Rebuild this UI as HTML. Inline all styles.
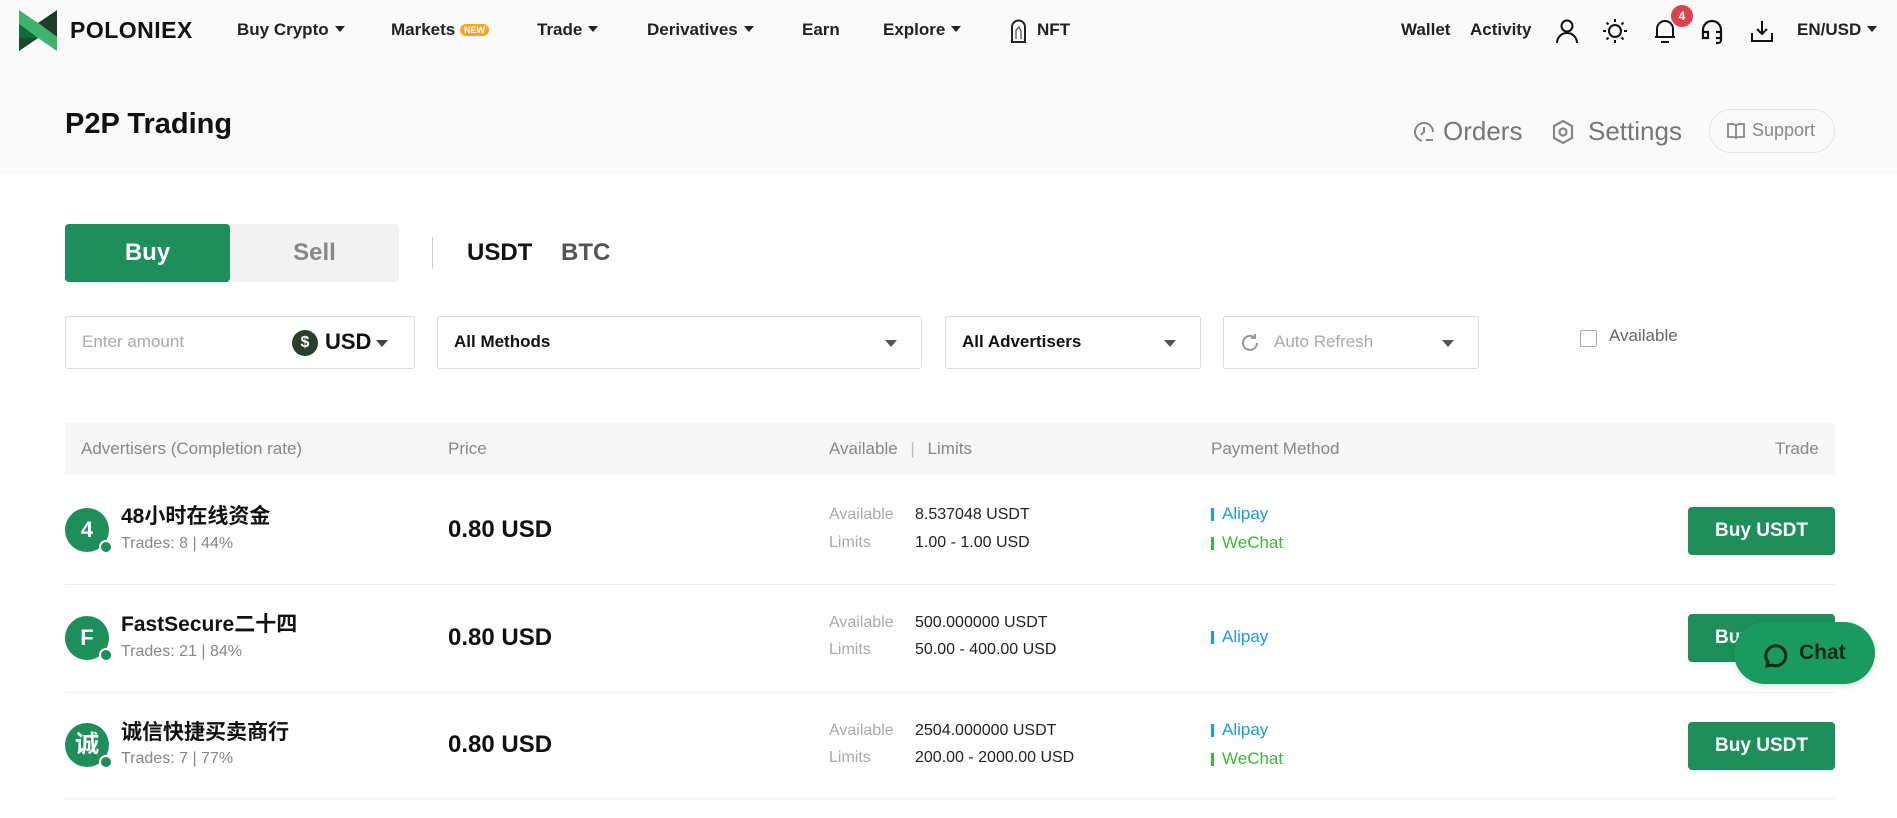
<!DOCTYPE html>
<html><head><meta charset="utf-8"><style>
*{box-sizing:border-box;margin:0;padding:0}
body{width:1897px;height:818px;overflow:hidden;background:#fff;font-family:"Liberation Sans","Noto Sans CJK SC",sans-serif;color:#111;position:relative}
.a{position:absolute;white-space:nowrap}
.top{position:absolute;left:0;top:0;width:1897px;height:174px;background:#fafafa}
.nav{font-size:17px;font-weight:bold;color:#222;top:20px}
.car{display:inline-block;width:0;height:0;border-left:5px solid transparent;border-right:5px solid transparent;border-top:6px solid #222;margin-left:6px;vertical-align:3px}
.inp{position:absolute;top:316px;height:53px;border:1px solid #ddd;border-radius:3px;background:#fff}
.inp .t{position:absolute;left:16px;top:15px;font-size:17px}
.inp .c{position:absolute;right:24px;top:23px;border-left:6px solid transparent;border-right:6px solid transparent;border-top:7px solid #555}
.hd{top:439px;font-size:17px;color:#888}
.av{position:absolute;left:65px;width:44px;height:44px;border-radius:50%;background:#1e8f5a;color:#fff;font-weight:bold;font-size:22px;text-align:center;line-height:44px}
.av i{position:absolute;right:-4px;bottom:-2px;width:14px;height:14px;border-radius:50%;background:#1e8f5a;border:2px solid #fff}
.nm{font-size:21px;font-weight:bold;color:#111}
.tr{font-size:16px;color:#888}
.pr{font-size:24px;font-weight:bold;left:448px}
.lb{font-size:16px;color:#aaa;left:829px}
.vl{font-size:16px;color:#222;left:915px}
.pm{font-size:17px;left:1211px;padding-left:11px;line-height:20px}
.pm:before{content:"";position:absolute;left:0;top:4px;width:3px;height:13px;background:currentColor}
.ali{color:#1a9ce0}
.wc{color:#3cb93c}
.btn{position:absolute;left:1688px;width:147px;height:48px;background:#1e8f5a;border-radius:4px;color:#fff;font-weight:bold;font-size:19px;text-align:center;line-height:48px}
.ln{position:absolute;left:65px;width:1770px;height:1px;background:#eee}
</style></head><body>
<div class="top"></div>
<svg class="a" style="left:19px;top:10px" width="38" height="41" viewBox="0 0 38 41"><polygon points="0,0 19,13 19,28 0,41" fill="#3db36b"/><polygon points="0,14 19,28 0,41" fill="#1a4a30"/><polygon points="38,0 19,13 38,27" fill="#1f3b2c"/><polygon points="19,13 38,27 38,41 19,28" fill="#3db36b"/><polygon points="0,14 19,28 0,28" fill="#0f6b3c"/></svg>
<div class="a" style="left:70px;top:17px;font-size:23px;font-weight:bold;letter-spacing:0.5px">POLONIEX</div>
<div class="a nav" style="left:237px">Buy Crypto<span class="car"></span></div>
<div class="a nav" style="left:391px">Markets <span style="display:inline-block;background:#f5a623;color:#fff;font-size:9px;border-radius:7px;padding:1px 4px;vertical-align:2px">NEW</span></div>
<div class="a nav" style="left:537px">Trade<span class="car"></span></div>
<div class="a nav" style="left:647px">Derivatives<span class="car"></span></div>
<div class="a nav" style="left:802px">Earn</div>
<div class="a nav" style="left:883px">Explore<span class="car"></span></div>
<svg class="a" style="left:1010px;top:19px" width="17" height="24" viewBox="0 0 17 24"><path d="M2 23V8a6.5 6.5 0 0 1 13 0v15z" fill="none" stroke="#222" stroke-width="2"/><path d="M6 20V11l3-3 2 4v8" fill="none" stroke="#555" stroke-width="1.3"/></svg>
<div class="a nav" style="left:1037px">NFT</div>
<div class="a nav" style="left:1401px">Wallet</div>
<div class="a nav" style="left:1470px">Activity</div>
<svg class="a" style="left:1554px;top:18px" width="26" height="26" viewBox="0 0 26 26" fill="none" stroke="#111" stroke-width="2"><circle cx="13" cy="8" r="5.5"/><path d="M3 25a10 10 0 0 1 20 0"/></svg>
<svg class="a" style="left:1602px;top:18px" width="26" height="26" viewBox="0 0 26 26" fill="none" stroke="#111" stroke-width="2"><circle cx="13" cy="13" r="6"/><path d="M13 1v3M13 22v3M1 13h3M22 13h3M4.5 4.5l2 2M19.5 19.5l2 2M4.5 21.5l2-2M19.5 6.5l2-2"/></svg>
<svg class="a" style="left:1653px;top:18px" width="24" height="26" viewBox="0 0 24 26" fill="none" stroke="#111" stroke-width="2"><path d="M4 19V11a8 8 0 0 1 16 0v8H2h20M8 24h8"/></svg>
<div class="a" style="left:1671px;top:5px;width:22px;height:22px;border-radius:50%;background:#d9434b;color:#fff;font-size:12px;font-weight:bold;text-align:center;line-height:22px">4</div>
<svg class="a" style="left:1700px;top:19px" width="24" height="26" viewBox="0 0 24 26" fill="none" stroke="#111" stroke-width="2.2"><path d="M3 18v-7a9 9 0 0 1 18 0v7M3 13h5v6H3zM16 13h5v6h-5M21 19v2a3 3 0 0 1-3 3h-2"/></svg>
<svg class="a" style="left:1750px;top:19px" width="24" height="24" viewBox="0 0 24 24" fill="none" stroke="#111" stroke-width="2"><path d="M12 2v13M7 10l5 5 5-5M2 14v8h20v-8"/></svg>
<div class="a nav" style="left:1797px">EN/USD<span class="car"></span></div>

<div class="a" style="left:65px;top:108px;font-size:29px;font-weight:bold">P2P Trading</div>
<svg class="a" style="left:1412px;top:120px" width="24" height="24" viewBox="0 0 24 24" fill="none" stroke="#888" stroke-width="2"><path d="M21 12a9 9 0 1 0-11 8.8"/><path d="M12 7v5l-3 3M14 20h7"/></svg>
<div class="a" style="left:1443px;top:116px;font-size:26px;color:#777">Orders</div>
<svg class="a" style="left:1551px;top:119px" width="24" height="26" viewBox="0 0 24 26" fill="none" stroke="#888" stroke-width="2.2"><path d="M12 2l9 5v12l-9 5-9-5V7z"/><circle cx="12" cy="13" r="3.5"/></svg>
<div class="a" style="left:1588px;top:116px;font-size:26px;color:#777">Settings</div>
<div class="a" style="left:1709px;top:109px;width:126px;height:44px;border:1px solid #e3e3e3;border-radius:22px;background:#fafafa"></div>
<svg class="a" style="left:1727px;top:122px" width="18" height="17" viewBox="0 0 18 17" fill="none" stroke="#888" stroke-width="1.8"><path d="M1 2h6l2 2 2-2h6v13h-6l-2 1-2-1H1zM9 4v12"/></svg>
<div class="a" style="left:1752px;top:120px;font-size:18px;color:#888">Support</div>

<div class="a" style="left:65px;top:224px;width:334px;height:58px;background:#f2f2f2;border-radius:4px"></div>
<div class="a" style="left:65px;top:224px;width:165px;height:58px;background:#1e8f5a;border-radius:4px;color:#fff;font-size:24px;font-weight:bold;text-align:center;line-height:58px">Buy</div>
<div class="a" style="left:230px;top:224px;width:169px;height:58px;color:#888;font-size:24px;font-weight:bold;text-align:center;line-height:58px">Sell</div>
<div class="a" style="left:432px;top:237px;width:1px;height:32px;background:#ccc"></div>
<div class="a" style="left:467px;top:239px;font-size:24px;font-weight:bold">USDT</div>
<div class="a" style="left:561px;top:239px;font-size:24px;font-weight:bold;color:#555">BTC</div>

<div class="inp" style="left:65px;width:350px"><span class="t" style="color:#aaa">Enter amount</span>
<div class="a" style="left:226px;top:13px;width:26px;height:26px;border-radius:50%;background:#2b3f2e;color:#fff;font-size:16px;font-weight:bold;text-align:center;line-height:26px">$</div>
<span class="a" style="left:259px;top:12px;font-size:22px;font-weight:bold">USD</span><span class="c" style="border-top-color:#444;right:26px"></span></div>
<div class="inp" style="left:437px;width:485px"><span class="t" style="font-weight:bold">All Methods</span><span class="c"></span></div>
<div class="inp" style="left:945px;width:256px"><span class="t" style="font-weight:bold">All Advertisers</span><span class="c"></span></div>
<div class="inp" style="left:1223px;width:256px">
<svg class="a" style="left:16px;top:16px" width="20" height="20" viewBox="0 0 20 20" fill="none" stroke="#999" stroke-width="2"><path d="M17 10a7 7 0 1 1-2-5M15 1v4h-4"/></svg>
<span class="t" style="left:50px;color:#aaa">Auto Refresh</span><span class="c"></span></div>
<div class="a" style="left:1580px;top:330px;width:17px;height:17px;border:1px solid #aaa;border-radius:2px"></div>
<div class="a" style="left:1609px;top:326px;font-size:17px;color:#666">Available</div>

<div class="a" style="left:65px;top:423px;width:1770px;height:52px;background:#f7f7f7"></div>
<div class="a hd" style="left:81px">Advertisers (Completion rate)</div>
<div class="a hd" style="left:448px">Price</div>
<div class="a hd" style="left:829px">Available <span style="color:#bbb;margin:0 8px">|</span> Limits</div>
<div class="a hd" style="left:1211px">Payment Method</div>
<div class="a hd" style="left:1775px">Trade</div>

<div class="av" style="top:508px">4<i></i></div>
<div class="a nm" style="left:121px;top:500px">48小时在线资金</div>
<div class="a tr" style="left:121px;top:535px">Trades: 8 | 44%</div>
<div class="a pr" style="top:516px">0.80 USD</div>
<div class="a lb" style="top:506px">Available</div><div class="a vl" style="top:506px">8.537048 USDT</div>
<div class="a lb" style="top:534px">Limits</div><div class="a vl" style="top:534px">1.00 - 1.00 USD</div>
<div class="a pm ali" style="top:504px">Alipay</div>
<div class="a pm wc" style="top:533px">WeChat</div>
<div class="btn" style="top:507px">Buy USDT</div>
<div class="ln" style="top:584px"></div>

<div class="av" style="top:616px">F<i></i></div>
<div class="a nm" style="left:121px;top:608px">FastSecure二十四</div>
<div class="a tr" style="left:121px;top:643px">Trades: 21 | 84%</div>
<div class="a pr" style="top:624px">0.80 USD</div>
<div class="a lb" style="top:614px">Available</div><div class="a vl" style="top:614px">500.000000 USDT</div>
<div class="a lb" style="top:641px">Limits</div><div class="a vl" style="top:641px">50.00 - 400.00 USD</div>
<div class="a pm ali" style="top:627px">Alipay</div>
<div class="btn" style="top:614px">Buy USDT</div>
<div class="ln" style="top:692px"></div>

<div class="av" style="top:723px;font-size:24px">诚<i></i></div>
<div class="a nm" style="left:121px;top:716px">诚信快捷买卖商行</div>
<div class="a tr" style="left:121px;top:750px">Trades: 7 | 77%</div>
<div class="a pr" style="top:731px">0.80 USD</div>
<div class="a lb" style="top:722px">Available</div><div class="a vl" style="top:722px">2504.000000 USDT</div>
<div class="a lb" style="top:749px">Limits</div><div class="a vl" style="top:749px">200.00 - 2000.00 USD</div>
<div class="a pm ali" style="top:720px">Alipay</div>
<div class="a pm wc" style="top:749px">WeChat</div>
<div class="btn" style="top:722px">Buy USDT</div>
<div class="ln" style="top:798px"></div>

<div class="a" style="left:1734px;top:622px;width:141px;height:62px;border-radius:31px;background:#1a9a5e;box-shadow:0 2px 6px rgba(0,0,0,.15)"></div>
<svg class="a" style="left:1762px;top:640px" width="28" height="28" viewBox="0 0 28 28" fill="none" stroke="#0d2a1a" stroke-width="3"><path d="M6 22a10 10 0 1 1 4 3l-5 1z"/></svg>
<div class="a" style="left:1799px;top:641px;font-size:21px;font-weight:bold;color:#0d2a1a">Chat</div>
</body></html>
